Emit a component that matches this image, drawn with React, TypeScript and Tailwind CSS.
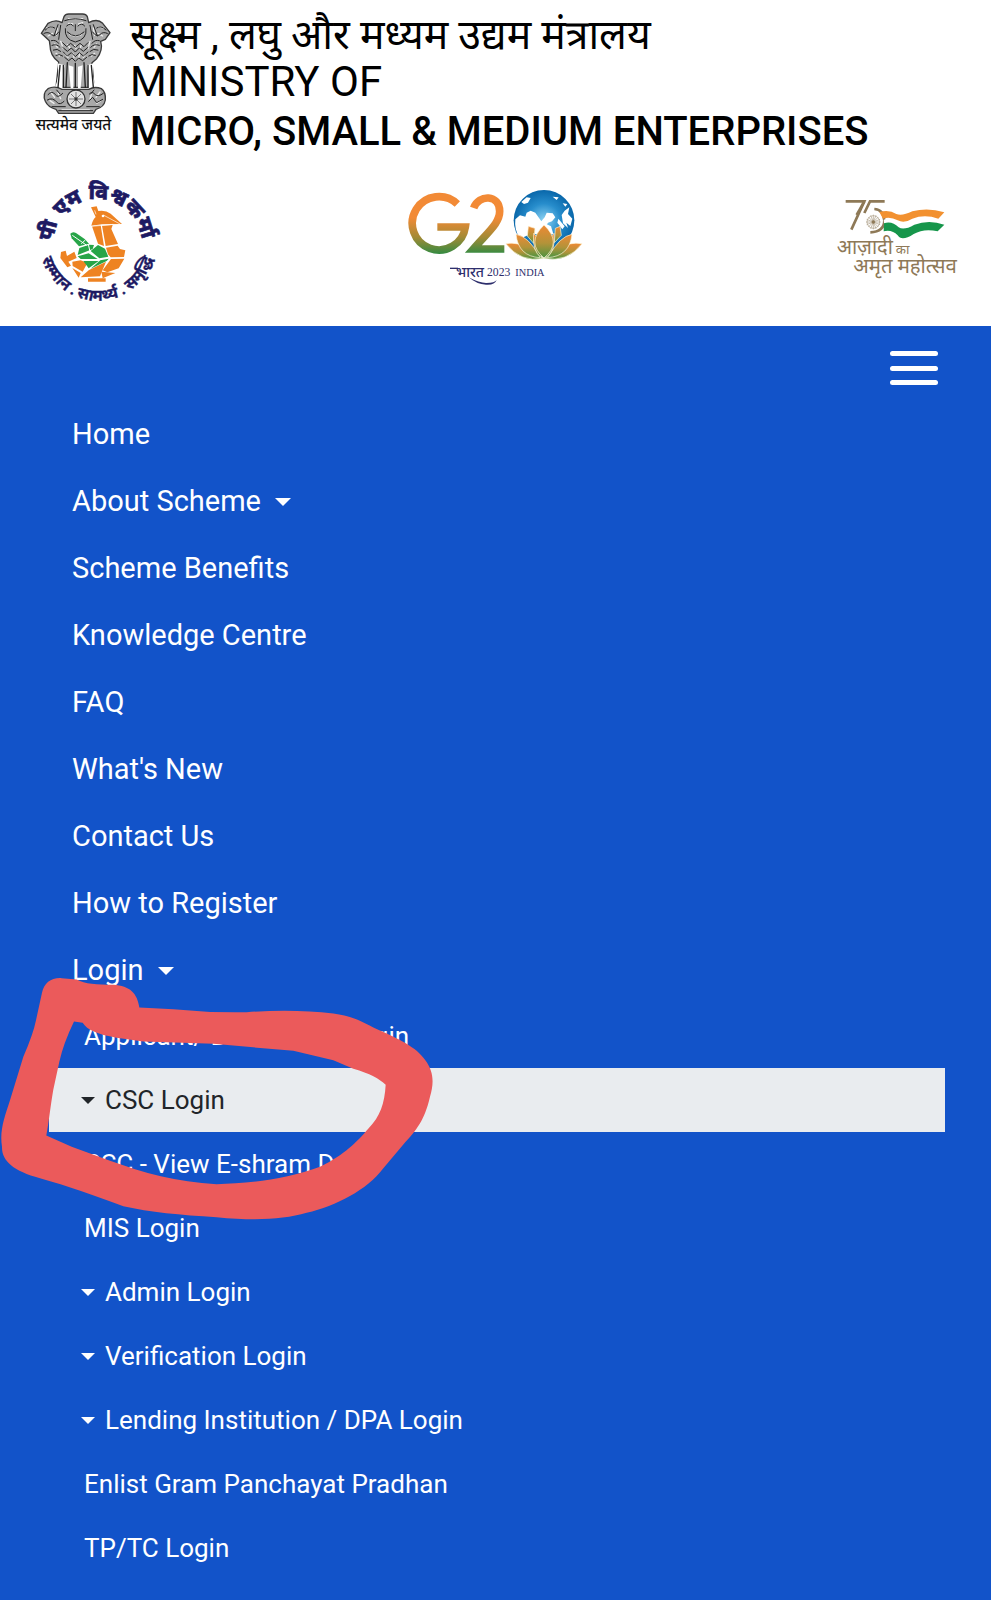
import React from "react";

const devanagari = "font-['Roboto','Noto_Sans_Devanagari','Noto_Sans',sans-serif]";

function Emblem() {
  return (
    <svg viewBox="0 0 330 420" className="h-[140px] w-[110px] shrink-0" role="img" aria-label="सत्यमेव जयते">
      <g fill="#a8a8a8" stroke="#3a3a3a" strokeWidth="4" strokeLinejoin="round">
        <path d="M132 50Q136 42 146 42H188Q198 42 202 50L206 68Q232 54 248 70L270 98L256 118L242 124Q250 150 230 176L216 188L222 262H108L116 186Q90 168 90 136L88 122L64 100L84 70Q108 56 126 68Z" />
        <path d="M112 190Q120 230 104 264H128Q128 220 134 196ZM222 190Q212 230 230 264H206Q208 220 200 196ZM146 196L152 264H160V200ZM188 196L182 264H174V200Z" fill="#fff" stroke="none" />
        <path d="M84 266Q66 280 76 304Q84 322 108 328L116 340H220L228 328Q252 322 256 300Q258 276 244 266Q224 258 206 268H126Q104 256 84 266Z" />
      </g>
      <g fill="none" stroke="#fff" strokeWidth="4" strokeLinecap="round" opacity="0.8">
        <path d="M146 56H188M146 70L158 72M176 72L188 68M150 104Q166 112 184 104M80 84L96 80M84 108L98 100M250 84L236 80M248 108L234 100M112 84L108 106M220 84L224 106" />
        <path d="M104 132L112 142M122 124L130 146M108 160L118 168M230 132L222 142M210 124L204 146M224 160L214 168M142 134L150 144M164 136L168 146M184 134L180 146M136 162L144 172M158 160L162 172M180 160L176 172M196 162L190 172" />
        <path d="M92 276L104 292M90 302L102 310M114 278L122 296M240 276L228 292M242 302L230 310M216 278L210 296M126 330H208" />
      </g>
      <g fill="none" stroke="#222" strokeWidth="3" strokeLinecap="round">
        <path d="M134 62Q166 50 198 62M140 78Q152 66 160 78M174 78Q184 66 194 78M166 74V92M142 96Q166 120 192 96M136 86Q132 118 166 126Q202 118 198 86M76 90Q90 74 104 84M72 100Q86 94 94 104Q106 112 116 96M258 90Q242 74 230 84M262 100Q248 94 240 104Q228 112 218 96" />
        <path d="M94 122Q108 118 116 130M96 136Q110 130 120 142M100 150Q112 144 122 154M108 166Q118 160 128 168M128 128L140 140L152 130L166 142L180 130L192 140L204 128M128 142L142 154L154 144L166 156L178 144L190 154L204 142M130 156L142 168L154 158L166 170L178 158L190 168L204 156M134 172L146 182L156 174L166 184L176 174L188 182L200 172M238 122Q224 118 216 130M238 136Q222 130 212 142M234 150Q220 144 210 154M226 166Q216 160 206 168M122 76L116 118M210 76L218 118M114 74L102 108M220 74L232 108" />
        <path d="M142 188L138 262M192 188L196 262M120 196L114 262M214 196L220 262M166 190V262M130 196V262M204 196V262" strokeWidth="4" />
        <path d="M84 284Q96 270 106 284Q114 296 128 280M82 300Q98 290 112 308Q120 316 132 304M208 282Q216 272 226 284Q234 292 250 280M206 304L218 292L230 308L248 298M96 320H136M200 320H238M116 332H218M110 270L120 282M222 270L212 282" />
      </g>
      <circle cx="168" cy="297" r="27" fill="#e2e2e2" stroke="#333" strokeWidth="4" />
      <path d="M168 276V318M147 297H189M153 282L183 312M153 312L183 282" stroke="#777" strokeWidth="3" />
      <circle cx="168" cy="297" r="5" fill="#333" />
      <text x="160" y="389" textAnchor="middle" fontSize="46" fontWeight="500" fill="#111" className={devanagari}>सत्यमेव जयते</text>
    </svg>
  );
}

function VishwakarmaLogo() {
  return (
    <svg viewBox="0 0 450 450" className="size-[150px] shrink-0" role="img" aria-label="पी एम विश्वकर्मा">
      <defs>
        <path id="ring-top" d="M100 250V235A132 132 0 0 1 364 235V265" />
        <path id="ring-bottom" d="M60 235A172 172 0 0 0 404 235" />
      </defs>
      <g fill="#1d1a63" stroke="#1d1a63" className={devanagari}>
        <g fontSize="63" fontWeight="800" strokeWidth="2">
          <text><textPath href="#ring-top" startOffset="20">पी</textPath></text>
          <text><textPath href="#ring-top" startOffset="98">एम</textPath></text>
          <text><textPath href="#ring-top" startOffset="196">विश्वकर्मा</textPath></text>
        </g>
        <text fontSize="47" fontWeight="700" strokeWidth="1">
          <textPath href="#ring-bottom" startOffset="50%" textAnchor="middle">सम्मान . सामर्थ्य . समृद्धि</textPath>
        </text>
      </g>
      <g fill="#ee8322">
        <path d="M213 127L230 124L235 138Q256 134 272 146L306 177L246 178L214 182Q218 164 227 156Z" />
        <path d="M216 184L242 181L252 243L234 236ZM246 182L278 180L274 192L294 237L257 243Z" />
        <path d="M258 248L293 242L300 252L316 256L312 276L272 277L264 268ZM273 282L313 281L296 310L262 322L248 316Z" />
        <path d="M123 261L137 257L141 273L163 260L170 279L145 290L153 302L142 307L121 279Z" />
        <path d="M157 290L182 286L202 294L188 320L158 303ZM157 309L182 324L176 338ZM207 315L258 290L240 334L182 337Z" />
        <path d="M244 320L286 324L248 340ZM204 340H257V350H204Z" />
      </g>
      <path d="M224 136L228 148M214 184L280 178M250 150L302 178" stroke="#fff" strokeWidth="2" />
      <circle cx="249" cy="153" r="4" fill="#fff" />
      <g fill="#27a548">
        <path d="M151 206Q158 198 168 204L194 222L207 236L177 244L155 220Z" />
        <path d="M178 249L207 239L222 240L218 252L173 270ZM173 274L206 265L233 282L182 282ZM212 258L234 240L255 251L265 275L238 280ZM190 288H236L206 310ZM241 286L266 281L260 288L212 311Z" />
      </g>
      <path d="M157 211L200 241M184 236L196 225M205 238L211 264" stroke="#fff" strokeWidth="3" fill="none" />
    </svg>
  );
}

function G20Logo() {
  return (
    <svg viewBox="0 0 600 360" className="h-[120px] w-[200px] shrink-0" role="img" aria-label="G20 भारत 2023 India">
      <defs>
        <linearGradient id="tricolour" gradientUnits="userSpaceOnUse" x1="0" y1="40" x2="0" y2="222">
          <stop offset="0.4" stopColor="#f28a36" />
          <stop offset="0.72" stopColor="#a48a35" />
          <stop offset="1" stopColor="#338b42" />
        </linearGradient>
        <linearGradient id="petal" x1="0" y1="0" x2="0" y2="1">
          <stop offset="0" stopColor="#ef8934" />
          <stop offset="0.55" stopColor="#b39339" />
          <stop offset="1" stopColor="#4c9440" />
        </linearGradient>
        <radialGradient id="ocean">
          <stop offset="0" stopColor="#8dd3f3" />
          <stop offset="0.55" stopColor="#278dcc" />
          <stop offset="1" stopColor="#0967aa" />
        </radialGradient>
      </defs>
      <g fill="none" stroke="url(#tricolour)" strokeWidth="23">
        <path d="M184 72A80 80 0 1 0 208 141H124" />
        <path d="M233 84C248 42 311 43 311 94C311 128 281 151 232 207H325" />
      </g>
      <circle cx="444" cy="121" r="91" fill="url(#ocean)" />
      <g fill="#fff">
        <path d="M376 66L392 52L404 54L396 68L384 72ZM470 50L488 52L482 60ZM500 70L514 72L508 80Z" />
        <path d="M358 118L372 106L388 110L392 98L404 92L418 98L436 124L446 112L452 98L470 100L478 112L468 124L456 128L444 146L424 140L416 158L404 162L372 176Q354 150 358 118ZM497 105L506 92L520 82L516 102L529 116L523 138L511 128L516 144L501 130ZM487 116L506 139L499 148L484 128Z" />
        <path d="M443 128L465 139L472 162H414L422 138Z" />
      </g>
      <g fill="url(#petal)" stroke="#fff6d8" strokeWidth="2">
        <path d="M330 191Q367 184 400 208L443 235Q374 249 330 191ZM558 191Q520 184 487 208L443 235Q514 249 558 191Z" />
        <path d="M360 163Q397 169 429 227L432 233Q367 229 360 163ZM528 163Q492 169 459 227L454 233Q521 229 528 163Z" />
        <path d="M397 139L417 145L413 190L394 168ZM478 145L492 139L496 166L475 188Z" />
        <path d="M413 160Q438 180 436 233Q408 213 413 160ZM474 160Q449 180 450 233Q480 213 474 160Z" />
        <path d="M444 135Q500 188 444 234Q389 188 444 135Z" />
      </g>
      <g fill="#2d2e6c">
        <path d="M162 263H186V267H162Z" />
        <text x="180" y="292" fontSize="42" fontWeight="500" className={devanagari}>भारत</text>
        <path d="M218 292Q252 310 272 309Q296 309 302 300Q296 316 270 314Q242 313 218 292Z" />
        <text x="273" y="289" fontSize="35" className="font-['Liberation_Serif',serif]">2023</text>
        <text x="358" y="288" fontSize="31" className="font-['Liberation_Serif',serif]">INDIA</text>
      </g>
    </svg>
  );
}

function AmritLogo() {
  return (
    <svg viewBox="0 0 450 300" className="h-[100px] w-[150px] shrink-0" role="img" aria-label="आज़ादी का अमृत महोत्सव">
      <g fill="none" stroke="#8e7957" strokeWidth="8">
        <path d="M74 34H130L91 119M191 34H147L130 69M160 57Q187 58 190 91Q190 126 148 127" />
        <path d="M130 34L107 75" />
      </g>
      <g stroke="#a99b84" strokeWidth="2" fill="none">
        <circle cx="157" cy="96" r="19" />
        <path d="M157 74V118M135 96H179M142 81L172 111M142 111L172 81M149 76L165 116M137 88L177 104M137 104L177 88M149 116L165 76" />
      </g>
      <circle cx="157" cy="96" r="5" fill="#8e7957" />
      <path d="M175 66Q205 58 226 72Q243 79 274 64Q321 51 370 67L352 86Q311 72 274 86Q250 101 230 91Q208 79 186 86Z" fill="#f29130" />
      <path d="M188 89Q209 81 231 96Q249 104 281 87Q318 75 350 89L348 101Q310 96 275 112Q250 128 230 116Q210 104 190 108Z" fill="#fff" />
      <path d="M189 100Q213 92 233 112Q249 122 280 104Q324 88 370 104L350 124Q309 114 278 132Q242 156 230 136Q213 118 188 124Z" fill="#16964b" />
      <g fill="#8e7957" className={devanagari}>
        <text x="47" y="191" fontSize="60">आज़ादी</text>
        <text x="224" y="193" fontSize="40">का</text>
        <text x="97" y="250" fontSize="61">अमृत महोत्सव</text>
      </g>
    </svg>
  );
}

function Caret({ small = false }: { small?: boolean }) {
  return (
    <svg viewBox="0 0 16 8" aria-hidden="true" className={small ? "h-[7px] w-[14px] fill-current" : "h-2 w-4 fill-current"}>
      <path d="M0 0H16L8 8Z" />
    </svg>
  );
}

function PenMark() {
  return (
    <svg viewBox="0 0 1320 800" aria-hidden="true" className="pointer-events-none absolute -top-[108px] -left-[49px] z-10 h-[267px] w-[440px]">
      <path
        fill="#eb5a5b"
        fillRule="evenodd"
        d="M126 98C132 68 154 52 185 54L230 58C255 72 290 73 340 74C390 77 412 100 418 142L520 147Q630 158 740 156Q880 146 1000 160C1060 168 1085 184 1120 202C1200 238 1248 260 1276 300C1302 335 1302 370 1290 410C1274 480 1250 510 1210 553L1150 624C1100 690 1010 736 920 758C850 779 760 782 650 771C540 764 450 756 370 738C290 708 200 676 120 654C40 632 5 602 6 560C-2 510 14 470 30 420L70 290Q100 220 108 180ZM222 184L248 188C262 210 290 222 350 233L430 244L640 251L880 272L1000 300L1060 326C1110 340 1138 356 1157 374C1154 430 1140 470 1106 504C1070 546 1035 582 960 620C860 658 740 671 650 672C530 666 430 638 330 602L215 560L139 526C146 490 151 440 160 388L178 305Q190 250 222 184Z"
      />
    </svg>
  );
}

const mainLinks = [
  { label: "Home" },
  { label: "About Scheme", menu: true },
  { label: "Scheme Benefits" },
  { label: "Knowledge Centre" },
  { label: "FAQ" },
  { label: "What's New" },
  { label: "Contact Us" },
  { label: "How to Register" },
  { label: "Login", menu: true },
];

const loginLinks = [
  { label: "Applicant/ Beneficiary Login" },
  { label: "CSC Login", menu: true, active: true },
  { label: "CSC - View E-shram Data" },
  { label: "MIS Login" },
  { label: "Admin Login", menu: true },
  { label: "Verification Login", menu: true },
  { label: "Lending Institution / DPA Login", menu: true },
  { label: "Enlist Gram Panchayat Pradhan" },
  { label: "TP/TC Login" },
];

export default function App() {
  return (
    <div className="flex min-h-screen flex-col overflow-hidden bg-[#1253c9] font-['Roboto',sans-serif]">
      <header className="bg-white px-5 pb-[11px] text-black">
        <div className="flex h-[165px] items-start">
          <Emblem />
          <div className="pt-[11px] whitespace-nowrap">
            <p className={`text-[41px] leading-[48px] ${devanagari}`}>सूक्ष्म , लघु और मध्यम उद्यम मंत्रालय</p>
            <p className="text-[42px] leading-[46px]">MINISTRY OF</p>
            <h1 className="text-[40px] leading-[54px] font-medium">MICRO, SMALL &amp; MEDIUM ENTERPRISES</h1>
          </div>
        </div>
        <div className="flex items-center justify-between">
          <VishwakarmaLogo />
          <G20Logo />
          <AmritLogo />
        </div>
      </header>

      <nav className="flex flex-col pr-[46px] pb-3 pl-[49px] text-white">
        <button type="button" aria-label="Toggle navigation" className="mt-6 mr-[7px] flex h-9 w-12 flex-col justify-between self-end py-px">
          <span className="h-[5px] w-full rounded-full bg-white" />
          <span className="h-[5px] w-full rounded-full bg-white" />
          <span className="h-[5px] w-full rounded-full bg-white" />
        </button>
        <ul className="mt-[15px]">
          {mainLinks.map((link) => (
            <li key={link.label}>
              <a href="#" className="flex items-center gap-3.5 pl-[23px] text-[29px] leading-[67px]">
                {link.label}
                {link.menu && <Caret />}
              </a>
            </li>
          ))}
        </ul>
        <ul>
          {loginLinks.map((link) => (
            <li key={link.label} className="relative">
              <a
                href="#"
                className={`flex items-center text-[26px] leading-[64px] ${link.menu ? "gap-2.5 pl-8" : "pl-[35px]"} ${link.active ? "bg-[#e9ecef] text-[#212529]" : ""}`}
              >
                {link.menu && <Caret small />}
                {link.label}
              </a>
              {link.active && <PenMark />}
            </li>
          ))}
        </ul>
      </nav>
    </div>
  );
}
